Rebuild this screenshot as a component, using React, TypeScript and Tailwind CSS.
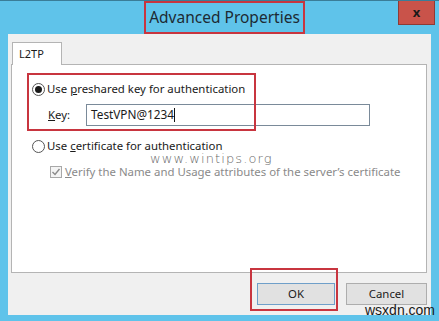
import React from "react";

const Radio = ({ checked }: { checked?: boolean }) => (
    <span className="w-[13px] h-[13px] rounded-full border border-[#555] bg-white flex items-center justify-center shrink-0">
        {checked && <span className="w-[7px] h-[7px] rounded-full bg-[#1a1a1a]" />}
    </span>
);

const App = () => {
    return (
        <div
            className="relative w-[439px] h-[321px] bg-[#5fc3ea] flex flex-col overflow-hidden text-[11.4px] text-[#1a1a1a]"
            style={{ fontFamily: '"Noto Sans", "Open Sans", sans-serif' }}
        >
            <div className="h-[1px] bg-[#3a7d98]" />
            {/* title bar */}
            <div className="relative h-[33px] flex justify-center">
                <div className="ml-[10px] h-[33px] border-2 border-[#c8353f] px-[3px] flex items-center text-[15.5px] text-[#1d2a33]">
                    Advanced Properties
                </div>
                <div className="absolute right-[4px] top-0 w-[37px] h-[24px] bg-[#c9534a] border border-[#8e3b35] border-t-0 flex items-center justify-center text-[13px] font-bold text-[#1a1a1a]">
                    x
                </div>
            </div>
            {/* body */}
            <div className="mx-[8px] h-[281px] bg-[#f0f0f0] flex flex-col pl-[3px] pr-[4px] pt-[8px]">
                <div className="ml-[1px] w-[50px] h-[23px] border border-b-0 border-[#b4b4b4] bg-white flex items-center pl-[6px] text-[11px] relative z-10 mb-[-1px]">
                    L2TP
                </div>
                <div className="h-[209px] border border-[#b4b4b4] bg-white flex flex-col pl-[20px] pt-[16px]">
                    <div className="h-[16px] flex items-center gap-[1px]">
                        <Radio checked />
                        <span className="ml-[1px]">
                            Use <u>p</u>reshared key for authentication
                        </span>
                    </div>
                    <div className="mt-[7px] h-[22px] flex items-center">
                        <span className="ml-[16px] w-[38px]">
                            <u>K</u>ey:
                        </span>
                        <div className="w-[284px] h-[22px] border border-[#7a8a99] bg-white flex items-center pl-[4px] text-[11.8px]">
                            TestVPN@1234
                            <span className="w-[1px] h-[14px] bg-[#111]" />
                        </div>
                    </div>
                    <div className="mt-[12px] h-[16px] flex items-center gap-[1px]">
                        <Radio />
                        <span className="ml-[1px] leading-[12px]">
                            Use <u>c</u>ertificate for authentication
                        </span>
                    </div>
                    <div className="mt-[10px] ml-[18px] h-[16px] flex items-center text-[#8a8a8a]">
                        <span className="w-[12px] h-[12px] border border-[#a8a8a8] bg-[#f4f4f4] flex items-center justify-center shrink-0">
                            <svg width="10" height="10" viewBox="0 0 10 10">
                                <path d="M1.5 5 L4 7.5 L8.5 2" fill="none" stroke="#8a8a8a" strokeWidth="1.4" />
                            </svg>
                        </span>
                        <span className="ml-[3px] leading-[12px]">
                            <u>V</u>erify the Name and Usage attributes of the server’s certificate
                        </span>
                    </div>
                </div>
                <div className="mt-[10px] flex justify-end gap-[11px]">
                    <div className="w-[78px] h-[22px] border border-[#6f9fc9] bg-[#e1e1e1] flex items-center justify-center">
                        OK
                    </div>
                    <div className="w-[81px] h-[22px] border border-[#adadad] bg-[#e1e1e1] flex items-center justify-center">
                        Cancel
                    </div>
                </div>
            </div>
            <div className="flex-1" />

            {/* annotations */}
            <div className="absolute left-[27px] top-[73px] w-[229px] h-[58px] border-2 border-[#c8353f]" />
            <div className="absolute left-[250px] top-[268px] w-[88px] h-[43px] border-2 border-[#c8353f]" />
            <div
                className="absolute left-[150px] top-[154px] text-[13px] leading-[10px] text-[#6a6a6a] tracking-[1.1px]"
                style={{ fontFamily: '"DejaVu Sans", sans-serif', fontWeight: 300 }}
            >
                www.wintips.org
            </div>
            <div className="absolute left-[365px] top-[302px] text-[14px] leading-[16px] text-[#1a1a1a]" style={{ fontFamily: '"Liberation Sans", sans-serif' }}>
                wsxdn.com
            </div>
        </div>
    );
};

export default App;
